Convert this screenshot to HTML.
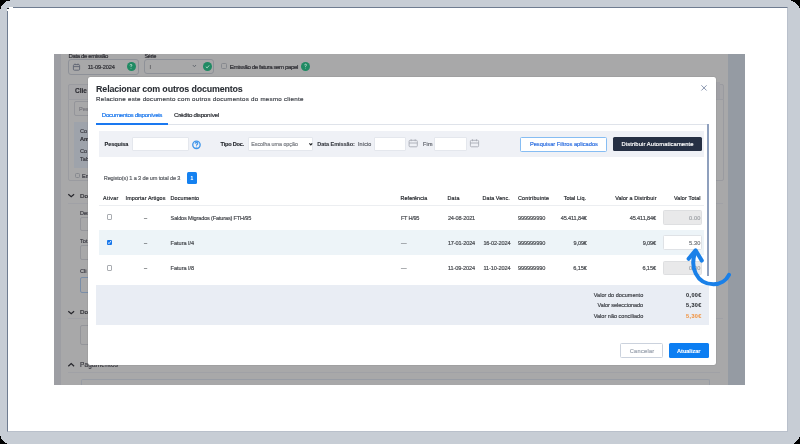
<!DOCTYPE html>
<html><head><meta charset="utf-8">
<style>
html,body{margin:0;padding:0;}
body{width:800px;height:444px;position:relative;overflow:hidden;background:#000;font-family:"Liberation Sans",sans-serif;}
.a{position:absolute;box-sizing:border-box;}
.t{position:absolute;white-space:nowrap;line-height:1;font-family:"Liberation Sans",sans-serif;-webkit-text-stroke-width:0.18px;}
</style></head><body>
<div id="wrap" style="position:absolute;left:0;top:0;width:800px;height:444px;filter:blur(0.45px);">
<!-- outer frame -->
<div class="a" style="left:0;top:0;width:800px;height:444px;background:#c7cdd5;border-radius:6px;"></div>
<div class="a" style="left:7px;top:7px;width:781px;height:425px;background:#fff;border-top:1px solid #6f7c90;border-left:1px solid #6f7c90;border-right:1px solid #b9c0cb;border-bottom:1px solid #b9c0cb;"></div>
<div class="a" style="left:9px;top:7px;width:4px;height:1px;background:#fff;"></div>
<div class="a" style="left:7px;top:9px;width:1px;height:1.5px;background:#fff;"></div>
<div class="a" style="left:7px;top:7px;width:2px;height:2px;background:#c7cdd5;"></div>
<div class="a" style="left:7px;top:8px;width:1.5px;height:1px;background:#1d2129;"></div>
<!-- screenshot backdrop -->
<div class="a" style="left:54px;top:54px;width:691px;height:331px;background:#a8a8a9;overflow:hidden;"></div>
<div class="a" style="left:54px;top:54px;width:7px;height:331px;background:#9d9ea3;"></div>
<div class="a" style="left:728px;top:54px;width:17px;height:331px;background:#959ba3;"></div>
<!-- bg top row -->
<div class="a" style="left:68px;top:59px;width:71px;height:15.5px;border:1px solid #8e9198;border-radius:3px;"></div>

<div class="a" style="left:126.5px;top:62px;width:9px;height:9px;border-radius:50%;background:#1f8a63;"></div>
<div class="a" style="left:144.4px;top:59px;width:70px;height:15px;border:1px solid #8e9198;border-radius:3px;"></div>
<div class="a" style="left:203px;top:62px;width:9px;height:9px;border-radius:50%;background:#1f8a63;"></div>
<div class="a" style="left:221px;top:63px;width:5.5px;height:6px;border:1px solid #86898f;border-radius:1.5px;"></div>
<div class="a" style="left:301px;top:61.8px;width:9px;height:9px;border-radius:50%;background:#1f8a63;"></div>
<!-- bg left card -->
<div class="a" style="left:68px;top:84px;width:655.5px;height:15px;background:#a5a5a8;border-radius:2px 2px 0 0;"></div>
<div class="a" style="left:68px;top:84px;width:655.5px;height:97px;border:1px solid #9a9ba0;border-radius:2px;"></div>
<div class="a" style="left:68px;top:98.5px;width:655.5px;height:1px;background:#9c9da2;"></div>
<div class="a" style="left:74px;top:101px;width:30px;height:14.5px;border:1px solid #94959a;border-radius:2px;"></div>
<div class="a" style="left:74.3px;top:122px;width:30px;height:46px;background:#9ea3ab;"></div>
<div class="a" style="left:74.5px;top:172.7px;width:5.5px;height:5.5px;border:1px solid #86898f;border-radius:1.5px;"></div>
<div class="a" style="left:68px;top:202.5px;width:655px;height:1px;background:#a0a1a6;"></div>
<div class="a" style="left:80px;top:217.3px;width:30px;height:14px;border:1px solid #94959a;border-radius:2px;"></div>
<div class="a" style="left:80px;top:245.3px;width:30px;height:15px;border:1px solid #94959a;border-radius:2px;"></div>
<div class="a" style="left:80px;top:277px;width:30px;height:15.5px;border:1px solid #7a8ea8;border-radius:2px;"></div>
<div class="a" style="left:68px;top:318.3px;width:655px;height:1px;background:#a0a1a6;"></div>
<div class="a" style="left:80px;top:325.3px;width:30px;height:20px;border:1px solid #94959a;border-radius:2px;"></div>
<div class="a" style="left:68px;top:372.3px;width:652px;height:1px;background:#a0a1a6;"></div>
<div class="a" style="left:80.5px;top:378.5px;width:629px;height:6px;border:1px solid #989ca4;border-bottom:none;border-radius:2px 2px 0 0;"></div>
<div class="a" style="left:716px;top:81.7px;width:4px;height:17px;background:#a0a0a5;"></div>
<svg class="a" style="left:0;top:0;" width="800" height="444">
 <path d="M68.3 194.3 L71.2 196.8 L74.1 194.3" fill="none" stroke="#25252b" stroke-width="1.2"/>
 <path d="M68.3 311.3 L71.2 313.8 L74.1 311.3" fill="none" stroke="#25252b" stroke-width="1.2"/>
 <path d="M68.3 366.3 L71.2 363.6 L74.1 366.3" fill="none" stroke="#25252b" stroke-width="1.2"/>
 <path d="M192.8 65 L194.4 66.8 L196 65" fill="none" stroke="#60646c" stroke-width="0.9"/>
 <g fill="none" stroke="#5d6372" stroke-width="0.9">
  <rect x="73.4" y="64.6" width="6.2" height="5.6" rx="1"/>
  <path d="M73.4 66.6 H79.6 M75 63.6 V65 M78 63.6 V65"/>
 </g>
 <g fill="none" stroke="#c9e6da" stroke-width="0.8">
  <path d="M130 65.4 Q130.1 64.4 131 64.4 Q132 64.5 131.9 65.3 Q131.8 65.9 131 66.3 L131 67"/>
  <path d="M205.8 66.7 L207.1 67.9 L209.2 65.4"/>
  <path d="M304.6 65.2 Q304.7 64.2 305.6 64.2 Q306.6 64.3 306.5 65.1 Q306.4 65.7 305.6 66.1 L305.6 66.8"/>
 </g>
 <circle cx="131" cy="68.3" r="0.45" fill="#c9e6da"/>
 <circle cx="305.6" cy="68.1" r="0.45" fill="#c9e6da"/>
</svg>
<span class="t" id="bg1" style="top:53.22px;font-size:6.0px;font-weight:400;color:#2c2c32;letter-spacing:-0.364px;left:68.50px;">Data de emissão</span>
<span class="t" id="bg2" style="top:65.26px;font-size:5.6px;font-weight:400;color:#2c2c32;letter-spacing:-0.122px;left:87.80px;">11-09-2024</span>
<span class="t" id="bg3" style="top:53.76px;font-size:5.6px;font-weight:400;color:#2c2c32;letter-spacing:-0.275px;left:144.40px;">Série</span>
<span class="t" id="bg4" style="top:65.26px;font-size:5.6px;font-weight:400;color:#5a5a5e;letter-spacing:0.000px;left:149.40px;">I</span>
<span class="t" id="bg5" style="top:64.25px;font-size:6.2px;font-weight:400;color:#2c2c32;letter-spacing:-0.440px;left:229.75px;">Emissão de fatura sem papel</span>
<span class="t" id="bg6" style="top:88.00px;font-size:6.5px;font-weight:700;color:#2a2a30;letter-spacing:0.000px;-webkit-text-stroke-width:0.1px;left:75.00px;">Clie</span>
<span class="t" id="bg7" style="top:106.76px;font-size:5.6px;font-weight:400;color:#7a7a80;letter-spacing:0.000px;left:79.00px;">Pes</span>
<span class="t" id="bg8" style="top:129.26px;font-size:5.6px;font-weight:400;color:#3a3a42;letter-spacing:0.000px;left:80.00px;">Co</span>
<span class="t" id="bg9" style="top:136.76px;font-size:5.6px;font-weight:700;color:#2a2a30;letter-spacing:0.000px;-webkit-text-stroke-width:0.1px;left:80.00px;">Am</span>
<span class="t" id="bg10" style="top:148.76px;font-size:5.6px;font-weight:400;color:#3a3a42;letter-spacing:0.000px;left:80.00px;">Co</span>
<span class="t" id="bg11" style="top:157.26px;font-size:5.6px;font-weight:400;color:#3a3a42;letter-spacing:0.000px;left:80.00px;">Tab</span>
<span class="t" id="bg12" style="top:174.26px;font-size:5.6px;font-weight:400;color:#3a3a42;letter-spacing:0.000px;left:82.00px;">Em</span>
<span class="t" id="bg13" style="top:192.75px;font-size:6.2px;font-weight:400;color:#2a2a30;letter-spacing:0.000px;left:80.00px;">Do</span>
<span class="t" id="bg14" style="top:210.76px;font-size:5.6px;font-weight:400;color:#3a3a42;letter-spacing:0.000px;left:80.00px;">Des</span>
<span class="t" id="bg15" style="top:239.26px;font-size:5.6px;font-weight:400;color:#3a3a42;letter-spacing:0.000px;left:80.00px;">Tot</span>
<span class="t" id="bg16" style="top:268.76px;font-size:5.6px;font-weight:400;color:#3a3a42;letter-spacing:0.000px;left:80.00px;">Cli</span>
<span class="t" id="bg17" style="top:308.75px;font-size:6.2px;font-weight:400;color:#2a2a30;letter-spacing:0.000px;left:80.00px;">Do</span>
<span class="t" id="bg18" style="top:362.00px;font-size:6.5px;font-weight:400;color:#3a3a40;letter-spacing:0.156px;left:80.00px;">Pagamentos</span>
<!-- modal -->
<div class="a" id="modal" style="left:88px;top:76.5px;width:628px;height:288.5px;background:#fff;border-radius:2px;box-shadow:0 0 1px rgba(0,0,0,0.45);"></div>
<svg class="a" style="left:0;top:0;" width="800" height="444">
 <path d="M701.4 85.3 L706.6 90.5 M706.6 85.3 L701.4 90.5" stroke="#7c8aa6" stroke-width="0.9" fill="none"/>
</svg>
<div class="a" style="left:96px;top:123px;width:72px;height:2px;background:#1a78f0;"></div>
<div class="a" style="left:168px;top:124px;width:541px;height:1px;background:#dfe3ea;"></div>
<div class="a" style="left:707px;top:124px;width:2px;height:152px;background:#8fa0bd;"></div>
<!-- filter bar -->
<div class="a" style="left:99px;top:131.4px;width:605px;height:25.2px;background:#eff1f6;"></div>
<div class="a" style="left:132.4px;top:137.3px;width:57px;height:14px;background:#fff;border:1px solid #e4e7ed;border-radius:1px;"></div>
<div class="a" style="left:247.8px;top:137.3px;width:65.5px;height:13.9px;background:#fff;border:1px solid #e4e7ed;border-radius:1px;"></div>
<div class="a" style="left:373.7px;top:137.2px;width:32.3px;height:14px;background:#fff;border:1px solid #e4e7ed;border-radius:1px;"></div>
<div class="a" style="left:434px;top:137.2px;width:33px;height:14px;background:#fff;border:1px solid #e4e7ed;border-radius:1px;"></div>
<div class="a" style="left:520.3px;top:136.8px;width:86.5px;height:15px;background:#fff;border:1px solid #86bdf3;border-radius:1.5px;"></div>
<div class="a" style="left:612.7px;top:136.8px;width:89.5px;height:14.2px;background:#263044;border-radius:1.5px;"></div>
<svg class="a" style="left:0;top:0;" width="800" height="444">
 <circle cx="196.45" cy="144.8" r="3.7" fill="none" stroke="#4096ea" stroke-width="1.35"/>
 <path d="M195.2 143.7 Q195.3 142.4 196.5 142.4 Q197.8 142.5 197.7 143.6 Q197.6 144.4 196.5 144.9 L196.5 145.8" fill="none" stroke="#4096ea" stroke-width="1.1"/>
 <circle cx="196.5" cy="147" r="0.5" fill="#4f9fec"/>
 <path d="M309.4 143.3 L310.8 144.8 L312.2 143.3" fill="none" stroke="#1f2226" stroke-width="1.2"/>
 <g fill="none" stroke="#a9adb5" stroke-width="0.9">
  <rect x="409.1" y="140.3" width="8.2" height="6.5" rx="1"/>
  <path d="M409.1 143 H417.3 M411.2 139.3 V141.2 M415.2 139.3 V141.2"/>
  <rect x="470.4" y="140.3" width="8.2" height="6.5" rx="1"/>
  <path d="M470.4 143 H478.6 M472.5 139.3 V141.2 M476.5 139.3 V141.2"/>
 </g>
</svg>
<!-- pagination -->
<div class="a" style="left:186.9px;top:171.8px;width:10.2px;height:11.8px;background:#1581f0;border-radius:1.5px;"></div>
<!-- table -->
<div class="a" style="left:99px;top:204.5px;width:605px;height:1px;background:#eceef1;"></div>
<div class="a" style="left:98.7px;top:230px;width:605px;height:25px;background:#edf4f8;"></div>
<div class="a" style="left:106.8px;top:214.3px;width:5px;height:5.8px;border:0.7px solid #a9acb1;border-radius:1px;background:#fff;"></div>
<div class="a" style="left:106.8px;top:239.6px;width:5px;height:5.6px;background:#1676ea;border-radius:1px;"></div>
<div class="a" style="left:106.8px;top:265px;width:5px;height:5.8px;border:0.7px solid #a9acb1;border-radius:1px;background:#fff;"></div>
<svg class="a" style="left:0;top:0;" width="800" height="444">
 <path d="M107.9 242.5 L109.1 243.7 L110.9 241" fill="none" stroke="#fff" stroke-width="0.8"/>
</svg>
<div class="a" style="left:662.7px;top:209.7px;width:39.2px;height:15.1px;background:#e9e9ea;border:1px solid #dedfe1;border-radius:1.5px;"></div>
<div class="a" style="left:662.7px;top:235.4px;width:39.2px;height:14.4px;background:#fff;border:1px solid #dfe2e6;border-radius:1.5px;"></div>
<div class="a" style="left:662.7px;top:260.8px;width:39.2px;height:14.3px;background:#e9e9ea;border:1px solid #dedfe1;border-radius:1.5px;"></div>
<!-- summary -->
<div class="a" style="left:96px;top:285px;width:613px;height:40px;background:#e9edf4;"></div>
<!-- footer -->
<div class="a" style="left:620.3px;top:343.3px;width:42.6px;height:14.4px;background:#fff;border:1px solid #cbd2dd;border-radius:1.5px;"></div>
<div class="a" style="left:669px;top:343.3px;width:39.7px;height:14.4px;background:#0c7ef2;border-radius:1.5px;"></div>
<span class="t" id="title" style="top:85.47px;font-size:8.9px;font-weight:700;color:#2a2e34;letter-spacing:-0.152px;-webkit-text-stroke-width:0.05px;left:96.10px;">Relacionar com outros documentos</span>
<span class="t" id="subt" style="top:95.75px;font-size:6.2px;font-weight:400;color:#3b3f46;letter-spacing:0.260px;left:96.10px;">Relacione este documento com outros documentos do mesmo cliente</span>
<span class="t" id="tab1" style="top:111.95px;font-size:6.2px;font-weight:400;color:#1473ec;letter-spacing:-0.324px;left:101.80px;">Documentos disponíveis</span>
<span class="t" id="tab2" style="top:111.95px;font-size:6.2px;font-weight:400;color:#25282e;letter-spacing:-0.265px;left:174.00px;">Crédito disponível</span>
<span class="t" id="lpesq" style="top:141.76px;font-size:5.6px;font-weight:700;color:#1d2026;letter-spacing:-0.100px;-webkit-text-stroke-width:0.1px;left:104.60px;">Pesquisa</span>
<span class="t" id="ltipo" style="top:141.86px;font-size:5.6px;font-weight:700;color:#1d2026;letter-spacing:-0.231px;-webkit-text-stroke-width:0.1px;left:220.60px;">Tipo Doc.</span>
<span class="t" id="sel" style="top:142.33px;font-size:5.4px;font-weight:400;color:#7a7d83;letter-spacing:-0.041px;left:251.25px;">Escolha uma opção</span>
<span class="t" id="ldata" style="top:141.86px;font-size:5.6px;font-weight:700;color:#3a3d44;letter-spacing:-0.075px;-webkit-text-stroke-width:0.1px;left:317.20px;">Data Emissão:</span>
<span class="t" id="linic" style="top:142.03px;font-size:5.4px;font-weight:400;color:#5a5e66;letter-spacing:0.060px;left:358.00px;">Início</span>
<span class="t" id="lfim" style="top:142.03px;font-size:5.4px;font-weight:400;color:#5a5e66;letter-spacing:0.200px;left:423.00px;">Fim</span>
<span class="t" id="bpesq" style="top:141.57px;font-size:5.7px;font-weight:400;color:#2c6ee0;letter-spacing:0.004px;left:529.90px;">Pesquisar Filtros aplicados</span>
<span class="t" id="bdist" style="top:142.39px;font-size:5.8px;font-weight:400;color:#ffffff;letter-spacing:0.108px;left:621.50px;">Distribuir Automaticamente</span>
<span class="t" id="reg" style="top:175.96px;font-size:5.6px;font-weight:400;color:#5d6066;letter-spacing:-0.139px;left:103.75px;">Registo(s) 1 a 3 de um total de 3</span>
<span class="t" id="pg1" style="top:175.77px;font-size:5.0px;font-weight:400;color:#ffffff;letter-spacing:0.000px;left:190.60px;">1</span>
<span class="t" id="h1" style="top:196.13px;font-size:5.4px;font-weight:400;color:#1f2227;letter-spacing:0.280px;left:103.10px;">Ativar</span>
<span class="t" id="h2" style="top:196.13px;font-size:5.4px;font-weight:400;color:#1f2227;letter-spacing:0.113px;left:125.60px;">Importar Artigos</span>
<span class="t" id="h3" style="top:196.13px;font-size:5.4px;font-weight:400;color:#1f2227;letter-spacing:0.119px;left:170.60px;">Documento</span>
<span class="t" id="h4" style="top:196.13px;font-size:5.4px;font-weight:400;color:#1f2227;letter-spacing:0.056px;left:400.60px;">Referência</span>
<span class="t" id="h5" style="top:196.13px;font-size:5.4px;font-weight:400;color:#1f2227;letter-spacing:0.267px;left:447.40px;">Data</span>
<span class="t" id="h6" style="top:196.13px;font-size:5.4px;font-weight:400;color:#1f2227;letter-spacing:0.078px;left:482.60px;">Data Venc.</span>
<span class="t" id="h7" style="top:196.13px;font-size:5.4px;font-weight:400;color:#1f2227;letter-spacing:0.173px;left:518.00px;">Contribuinte</span>
<span class="t" id="h8" style="top:196.13px;font-size:5.4px;font-weight:400;color:#1f2227;letter-spacing:0.056px;left:563.70px;">Total Líq.</span>
<span class="t" id="h9" style="top:196.13px;font-size:5.4px;font-weight:400;color:#1f2227;letter-spacing:0.106px;left:615.20px;">Valor a Distribuir</span>
<span class="t" id="h10" style="top:196.13px;font-size:5.4px;font-weight:400;color:#1f2227;letter-spacing:0.160px;left:674.00px;">Valor Total</span>
<span class="t" id="r0dash" style="top:216.26px;font-size:5.6px;font-weight:400;color:#6a6d72;letter-spacing:0.000px;left:144.00px;">–</span>
<span class="t" id="r0doc" style="top:216.26px;font-size:5.6px;font-weight:400;color:#46494e;letter-spacing:-0.171px;left:170.60px;">Saldos Migrados (Faturas) FTH/95</span>
<span class="t" id="r0ref" style="top:216.26px;font-size:5.6px;font-weight:400;color:#46494e;letter-spacing:-0.300px;left:401.00px;">FT H/95</span>
<span class="t" id="r0d1" style="top:216.26px;font-size:5.6px;font-weight:400;color:#46494e;letter-spacing:-0.144px;left:447.90px;">24-08-2021</span>
<span class="t" id="r0nif" style="top:216.26px;font-size:5.6px;font-weight:400;color:#46494e;letter-spacing:-0.088px;left:518.00px;">999999990</span>
<span class="t" id="r0tl" style="top:216.26px;font-size:5.6px;font-weight:400;color:#46494e;letter-spacing:-0.144px;right:213.20px;">45.411,84€</span>
<span class="t" id="r0vd" style="top:216.26px;font-size:5.6px;font-weight:400;color:#46494e;letter-spacing:-0.144px;right:144.10px;">45.411,84€</span>
<span class="t" id="r0vt" style="top:216.26px;font-size:5.6px;font-weight:400;color:#a0a3a8;letter-spacing:0.150px;right:99.50px;">0.00</span>
<span class="t" id="r1dash" style="top:240.86px;font-size:5.6px;font-weight:400;color:#6a6d72;letter-spacing:0.000px;left:144.00px;">–</span>
<span class="t" id="r1doc" style="top:240.86px;font-size:5.6px;font-weight:400;color:#46494e;letter-spacing:-0.039px;left:170.60px;">Fatura I/4</span>
<span class="t" id="r1ref" style="top:240.86px;font-size:5.6px;font-weight:400;color:#8a8d92;letter-spacing:0.000px;left:401.00px;">—</span>
<span class="t" id="r1d1" style="top:240.86px;font-size:5.6px;font-weight:400;color:#46494e;letter-spacing:-0.144px;left:447.90px;">17-01-2024</span>
<span class="t" id="r1d2" style="top:240.86px;font-size:5.6px;font-weight:400;color:#46494e;letter-spacing:-0.167px;left:483.40px;">16-02-2024</span>
<span class="t" id="r1nif" style="top:240.86px;font-size:5.6px;font-weight:400;color:#46494e;letter-spacing:-0.088px;left:518.00px;">999999990</span>
<span class="t" id="r1tl" style="top:240.86px;font-size:5.6px;font-weight:400;color:#46494e;letter-spacing:-0.144px;right:213.20px;">9,09€</span>
<span class="t" id="r1vd" style="top:240.86px;font-size:5.6px;font-weight:400;color:#46494e;letter-spacing:-0.144px;right:144.10px;">9,09€</span>
<span class="t" id="r1vt" style="top:240.86px;font-size:5.6px;font-weight:400;color:#74777c;letter-spacing:0.150px;right:99.50px;">5.30</span>
<span class="t" id="r2dash" style="top:266.46px;font-size:5.6px;font-weight:400;color:#6a6d72;letter-spacing:0.000px;left:144.00px;">–</span>
<span class="t" id="r2doc" style="top:266.46px;font-size:5.6px;font-weight:400;color:#46494e;letter-spacing:-0.039px;left:170.60px;">Fatura I/8</span>
<span class="t" id="r2ref" style="top:266.46px;font-size:5.6px;font-weight:400;color:#8a8d92;letter-spacing:0.000px;left:401.00px;">—</span>
<span class="t" id="r2d1" style="top:266.46px;font-size:5.6px;font-weight:400;color:#46494e;letter-spacing:-0.100px;left:447.90px;">11-09-2024</span>
<span class="t" id="r2d2" style="top:266.46px;font-size:5.6px;font-weight:400;color:#46494e;letter-spacing:-0.122px;left:483.40px;">11-10-2024</span>
<span class="t" id="r2nif" style="top:266.46px;font-size:5.6px;font-weight:400;color:#46494e;letter-spacing:-0.088px;left:518.00px;">999999990</span>
<span class="t" id="r2tl" style="top:266.46px;font-size:5.6px;font-weight:400;color:#46494e;letter-spacing:-0.100px;right:213.20px;">6,15€</span>
<span class="t" id="r2vd" style="top:266.46px;font-size:5.6px;font-weight:400;color:#46494e;letter-spacing:-0.100px;right:144.10px;">6,15€</span>
<span class="t" id="r2vt" style="top:266.46px;font-size:5.6px;font-weight:400;color:#a0a3a8;letter-spacing:0.150px;right:99.50px;">0.00</span>
<span class="t" id="s1" style="top:293.04px;font-size:5.5px;font-weight:400;color:#3f4248;letter-spacing:0.038px;left:593.75px;">Valor do documento</span>
<span class="t" id="s2" style="top:303.34px;font-size:5.5px;font-weight:400;color:#3f4248;letter-spacing:-0.024px;left:597.50px;">Valor seleccionado</span>
<span class="t" id="s3" style="top:314.04px;font-size:5.5px;font-weight:400;color:#3f4248;letter-spacing:0.018px;left:593.75px;">Valor não conciliado</span>
<span class="t" id="v1" style="top:293.04px;font-size:5.5px;font-weight:700;color:#33363b;letter-spacing:0.400px;-webkit-text-stroke-width:0.1px;left:686.00px;">0,00€</span>
<span class="t" id="v2" style="top:303.34px;font-size:5.5px;font-weight:700;color:#33363b;letter-spacing:0.400px;-webkit-text-stroke-width:0.1px;left:686.00px;">5,30€</span>
<span class="t" id="v3" style="top:314.04px;font-size:5.5px;font-weight:700;color:#f0984a;letter-spacing:0.400px;-webkit-text-stroke-width:0.1px;left:686.00px;">5,30€</span>
<span class="t" id="bcanc" style="top:349.06px;font-size:5.6px;font-weight:400;color:#9aa2ae;letter-spacing:0.300px;left:629.75px;">Cancelar</span>
<span class="t" id="batu" style="top:349.06px;font-size:5.6px;font-weight:700;color:#ffffff;letter-spacing:-0.038px;-webkit-text-stroke-width:0.1px;left:677.10px;">Atualizar</span>
<!-- arrow -->
<svg class="a" style="left:0;top:0;" width="800" height="444">
 <path d="M695.6 251.5 C689.3 267, 696.5 284.3, 713.5 284.3 C720.5 284.3, 726.3 280.2, 729 274.8" fill="none" stroke="#1a80e8" stroke-width="4" stroke-linecap="round"/>
 <path d="M688.6 258.8 L695.6 250.3 L701.8 260.6" fill="none" stroke="#1a80e8" stroke-width="4" stroke-linecap="round" stroke-linejoin="round"/>
</svg>
</div>
<svg class="a" style="left:0;top:0;" width="800" height="444" shape-rendering="crispEdges">
 <polygon points="0,0 10,0 10,1 6,1 6,2 5,2 5,3 4,3 4,4 3,4 3,5 2,5 2,6 1,6 1,9 0,9" fill="#000"/>
 <polygon points="800,0 791,0 791,1 793,1 793,2 795,2 795,3 796,3 796,4 797,4 797,5 798,5 798,6 799,6 799,8 800,8" fill="#000"/>
 <polygon points="0,444 7,444 7,443 5,443 5,442 4,442 4,441 3,441 3,440 2,440 2,439 1,439 1,436 0,436" fill="#000"/>
 <polygon points="800,444 794,444 794,443 795,443 795,442 796,442 796,441 797,441 797,440 798,440 798,439 799,439 799,437 800,437" fill="#000"/>
</svg>
</body></html>
